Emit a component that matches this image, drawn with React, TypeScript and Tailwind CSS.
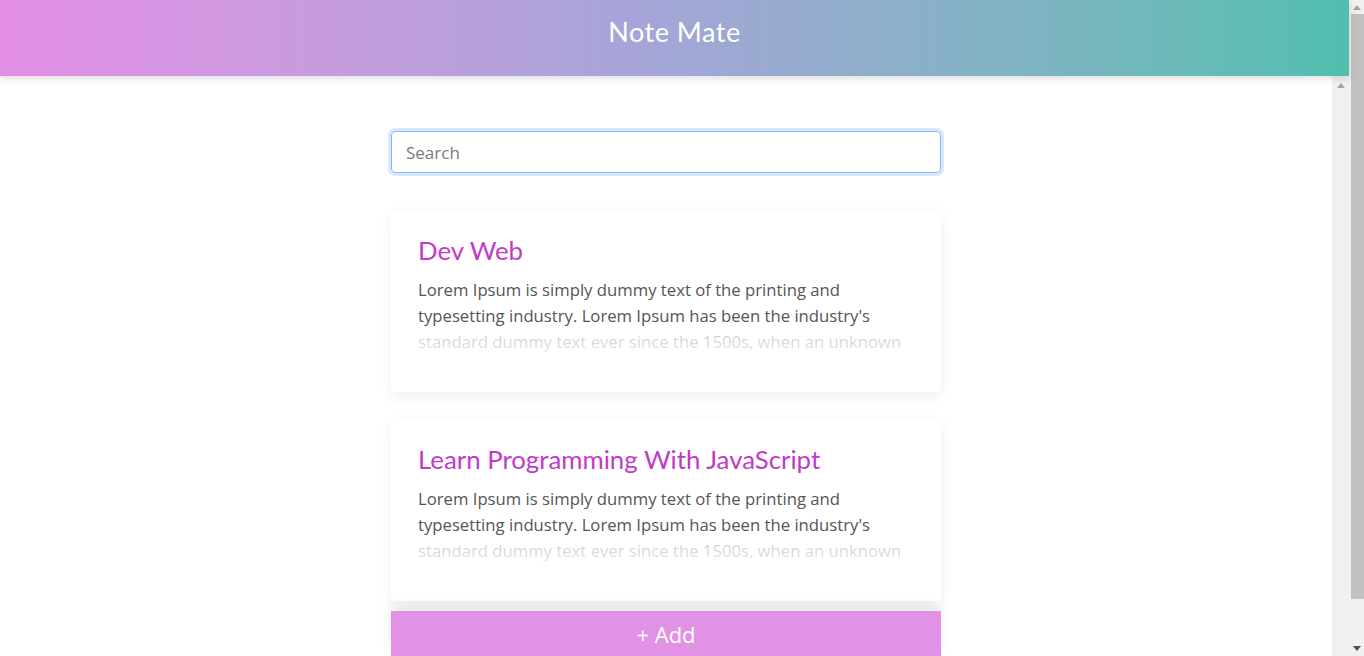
import React from "react";

const lorem =
  "Lorem Ipsum is simply dummy text of the printing and typesetting industry. Lorem Ipsum has been the industry's standard dummy text ever since the 1500s, when an unknown";

const notes = [
  { id: 1, title: "Dev Web", body: lorem },
  { id: 2, title: "Learn Programming With JavaScript", body: lorem },
];

const NoteCard = ({ title, body }: { title: string; body: string }) => {
  return (
    <div className="bg-white rounded-[4px] shadow-[0_4px_14px_rgba(0,0,0,0.07)] px-[27px] pt-[23px] pb-[37px]">
      <h2 className="text-[25.8px] leading-[32px] text-[#c23ac8] font-['Lato',sans-serif]">
        {title}
      </h2>
      <div className="relative mt-[11px]">
        <p className="text-[16.7px] leading-[26px] text-[#555] font-['Open_Sans',sans-serif]">
          {body}
        </p>
        {/* fade last line */}
        <div className="absolute left-0 right-0 top-[52px] h-[26px] bg-gradient-to-b from-white/70 to-white/85" />
      </div>
    </div>
  );
};

const Arrow = ({ up }: { up?: boolean }) => (
  <div
    className={
      up
        ? "w-0 h-0 border-l-[4px] border-r-[4px] border-b-[5px] border-l-transparent border-r-transparent border-b-[#a3a3a3]"
        : "w-0 h-0 border-l-[4px] border-r-[4px] border-t-[5px] border-l-transparent border-r-transparent border-t-[#505050]"
    }
  />
);

const App = () => {
  return (
    <div className="flex h-[656px] w-full overflow-hidden bg-white">
      <div className="flex-1 flex flex-col min-w-0">
        {/* Header */}
        <header className="relative z-10 h-[76px] shrink-0 flex items-center justify-center pb-[12px] bg-gradient-to-r from-[#e48fe6] via-[#a2a6d6] to-[#4fbfaf] shadow-[0_2px_8px_rgba(0,0,0,0.15)]">
          <h1 className="text-white text-[27px] tracking-[0.5px] font-['Lato',sans-serif]">
            Note Mate
          </h1>
        </header>

        <div className="flex-1 flex min-h-0">
          {/* Main */}
          <main className="flex-1 flex flex-col items-center pt-[55px]">
            <div className="w-[550px] flex flex-col">
              <input
                type="text"
                placeholder="Search"
                className="h-[42px] w-full rounded-[4px] border border-[#86b7fe] px-[14px] text-[17px] text-[#495057] placeholder:text-[#7a7a7a] outline-none shadow-[0_0_0_3px_rgba(13,110,253,0.15)] font-['Open_Sans',sans-serif]"
              />

              <div className="mt-[38px] flex flex-col gap-[28px]">
                {notes.map((n) => (
                  <NoteCard key={n.id} title={n.title} body={n.body} />
                ))}
              </div>

              <button className="mt-[10px] h-[46px] w-full bg-[#e192e4] text-white text-[22px] font-['Open_Sans',sans-serif] shadow-[0_-6px_10px_rgba(0,0,0,0.08)]">
                + Add
              </button>
            </div>
          </main>

          {/* inner scrollbar */}
          <div className="w-[17px] shrink-0 bg-[#f0f0f0] flex justify-center pt-[7px]">
            <Arrow up />
          </div>
        </div>
      </div>

      {/* outer scrollbar */}
      <div className="w-[15px] shrink-0 bg-[#f1f1f1] flex flex-col items-center">
        <div className="h-[14px] flex items-center justify-center">
          <Arrow up />
        </div>
        <div className="w-[13px] ml-[2px] h-[585px] bg-[#c1c1c1]" />
        <div className="flex-1 flex items-end justify-center pb-[5px]">
          <Arrow />
        </div>
      </div>
    </div>
  );
};

export default App;
